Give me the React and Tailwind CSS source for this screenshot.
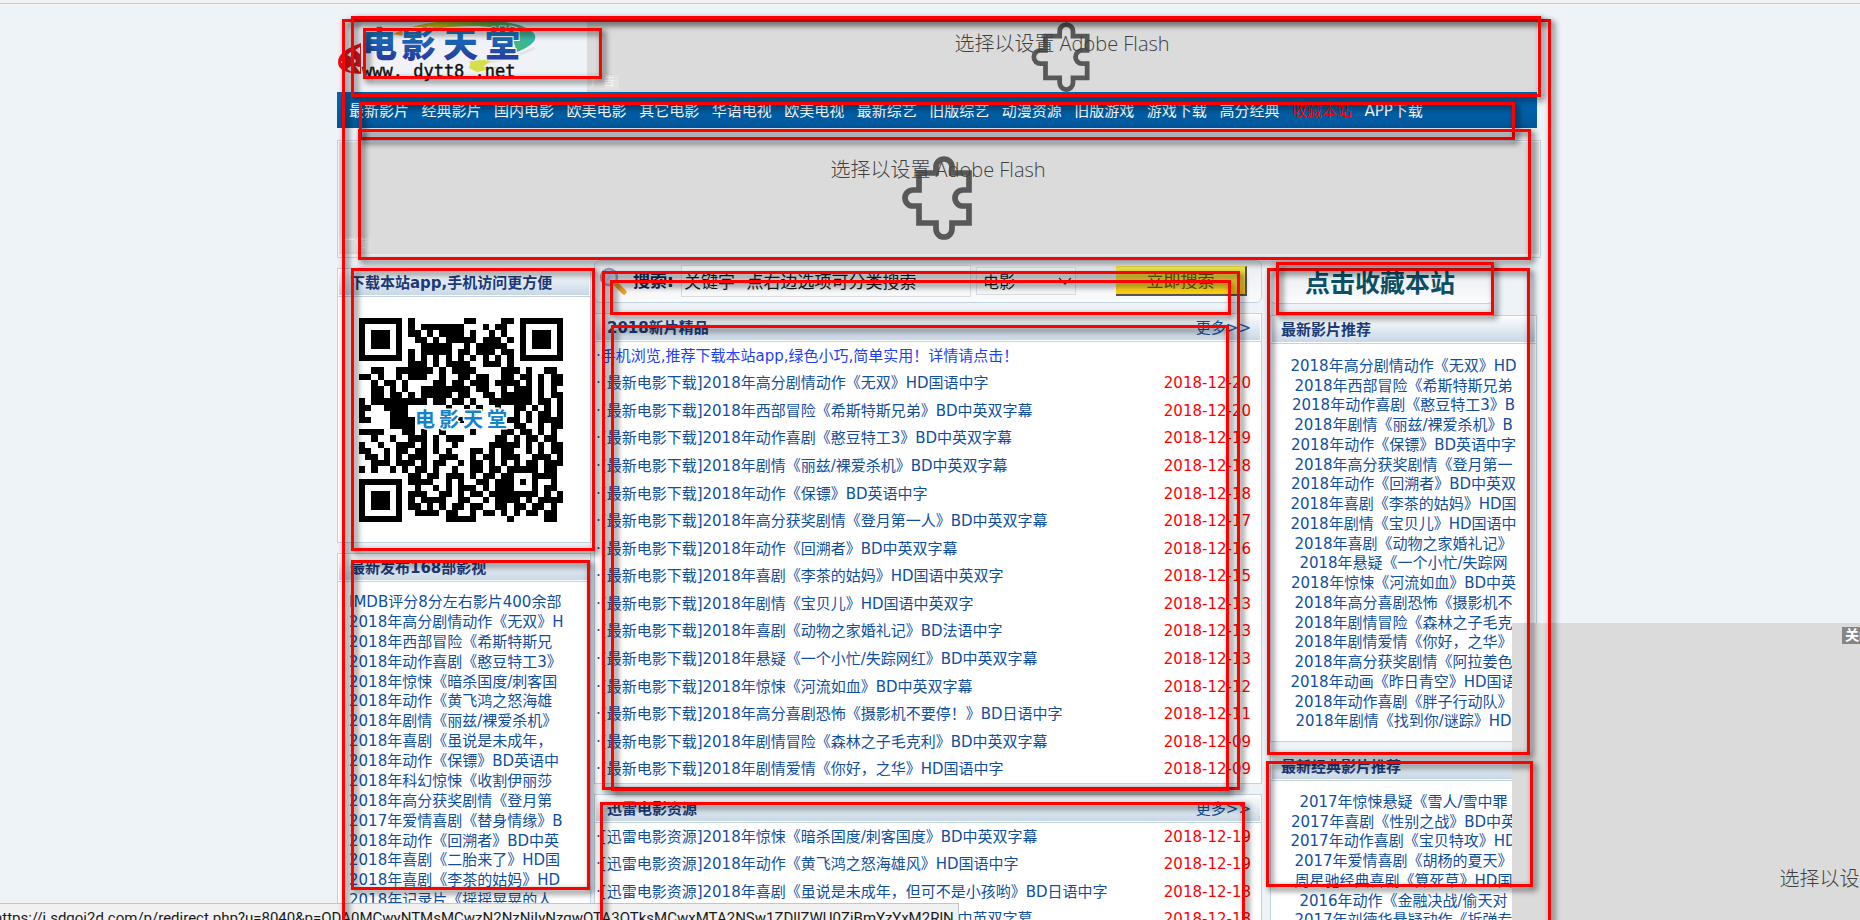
import React from "react";

const NAV = [
  "最新影片", "经典影片", "国内电影", "欧美电影", "其它电影", "华语电视", "欧美电视", "最新综艺",
  "旧版综艺", "动漫资源", "旧版游戏", "游戏下载", "高分经典", "收藏本站", "APP下载",
];

const NEW_168 = [
  "IMDB评分8分左右影片400余部",
  "2018年高分剧情动作《无双》H",
  "2018年西部冒险《希斯特斯兄",
  "2018年动作喜剧《憨豆特工3》",
  "2018年惊悚《暗杀国度/刺客国",
  "2018年动作《黄飞鸿之怒海雄",
  "2018年剧情《丽兹/裸爱杀机》",
  "2018年喜剧《虽说是未成年，",
  "2018年动作《保镖》BD英语中",
  "2018年科幻惊悚《收割伊丽莎",
  "2018年高分获奖剧情《登月第",
  "2017年爱情喜剧《替身情缘》B",
  "2018年动作《回溯者》BD中英",
  "2018年喜剧《二胎来了》HD国",
  "2018年喜剧《李茶的姑妈》HD",
  "2018年记录片《摇摇晃晃的人",
];

const BEST_2018 = [
  ["2018年高分剧情动作《无双》HD国语中字", "2018-12-20"],
  ["2018年西部冒险《希斯特斯兄弟》BD中英双字幕", "2018-12-20"],
  ["2018年动作喜剧《憨豆特工3》BD中英双字幕", "2018-12-19"],
  ["2018年剧情《丽兹/裸爱杀机》BD中英双字幕", "2018-12-18"],
  ["2018年动作《保镖》BD英语中字", "2018-12-18"],
  ["2018年高分获奖剧情《登月第一人》BD中英双字幕", "2018-12-17"],
  ["2018年动作《回溯者》BD中英双字幕", "2018-12-16"],
  ["2018年喜剧《李茶的姑妈》HD国语中英双字", "2018-12-15"],
  ["2018年剧情《宝贝儿》HD国语中英双字", "2018-12-13"],
  ["2018年喜剧《动物之家婚礼记》BD法语中字", "2018-12-13"],
  ["2018年悬疑《一个小忙/失踪网红》BD中英双字幕", "2018-12-13"],
  ["2018年惊悚《河流如血》BD中英双字幕", "2018-12-12"],
  ["2018年高分喜剧恐怖《摄影机不要停！》BD日语中字", "2018-12-11"],
  ["2018年剧情冒险《森林之子毛克利》BD中英双字幕", "2018-12-09"],
  ["2018年剧情爱情《你好，之华》HD国语中字", "2018-12-09"],
];

const XUNLEI = [
  ["2018年惊悚《暗杀国度/刺客国度》BD中英双字幕", "2018-12-19"],
  ["2018年动作《黄飞鸿之怒海雄风》HD国语中字", "2018-12-19"],
  ["2018年喜剧《虽说是未成年，但可不是小孩哟》BD日语中字", "2018-12-18"],
  ["2018年科幻惊悚《收割伊丽莎白》BD中英双字幕", "2018-12-18"],
];

const RECOMMENDED = [
  "2018年高分剧情动作《无双》HD",
  "2018年西部冒险《希斯特斯兄弟",
  "2018年动作喜剧《憨豆特工3》B",
  "2018年剧情《丽兹/裸爱杀机》B",
  "2018年动作《保镖》BD英语中字",
  "2018年高分获奖剧情《登月第一",
  "2018年动作《回溯者》BD中英双",
  "2018年喜剧《李茶的姑妈》HD国",
  "2018年剧情《宝贝儿》HD国语中",
  "2018年喜剧《动物之家婚礼记》",
  "2018年悬疑《一个小忙/失踪网",
  "2018年惊悚《河流如血》BD中英",
  "2018年高分喜剧恐怖《摄影机不",
  "2018年剧情冒险《森林之子毛克",
  "2018年剧情爱情《你好，之华》",
  "2018年高分获奖剧情《阿拉姜色",
  "2018年动画《昨日青空》HD国语",
  "2018年动作喜剧《胖子行动队》",
  "2018年剧情《找到你/谜踪》HD",
];

const CLASSICS = [
  "2017年惊悚悬疑《雪人/雪中罪",
  "2017年喜剧《性别之战》BD中英",
  "2017年动作喜剧《宝贝特攻》HD",
  "2017年爱情喜剧《胡杨的夏天》",
  "周星驰经典喜剧《算死草》HD国",
  "2016年动作《金融决战/偷天对",
  "2017年刘德华悬疑动作《拆弹专",
];

const QR = [
  "#######.#........##....##.#######",
  "#.....#.#.#######...#.##..#.....#",
  "#.###.#.##.#.####.#..#.#..#.###.#",
  "#.###.#..##.#.#####.###.#.#.###.#",
  "#.###.#...#####..#.#####..#.###.#",
  "#.....#.#.#####.##.###.##.#.....#",
  "#######.#.#.#.#.#.#.#.#.#.#######",
  "........###.#.####..###.#........",
  "..##..######.#.####....###.#..##.",
  "##.#..#.###..#..##.##..##.##.#.##",
  "..#.##.#....##.##.###.####.#.#.##",
  "..##.#.#..########.##..#.###.#.#.",
  "..##.##.#.#####.##..##.#####.#.##",
  "#.#########.##.##.#..#######.##.#",
  "##..####......#..#.#..#..##.#.#.#",
  "#....###..........#......#.#.##.#",
  "##...####.......#.......##.#.####",
  ".....####................##..#.##",
  "####...##.#..#....#....##.##.#.#.",
  "..#..#..###.#.###.....##.#.##.##.",
  "#..#..###.#.#..#.....#####.#.#.##",
  "##..#.##.##.#.#...##.#.##..#.#.##",
  ".##.#.#.###..###..#.##.###..###.#",
  "..###.###.#.##..#.##.#.#.#.##.###",
  "#.#..#.#.##.#..#..##.##.#####.##.",
  "........##.##.###.#.##.##...####.",
  "#######.####..#.#..##.###.#.#..#.",
  "#.....#..#..#.#.###.#.###...#.##.",
  "#.###.#.###..##.#.##.########.#.#",
  "#.###.#.#.####..##..#.####.#.####",
  "#.###.#.##.#.#.##.##..##.##.##.#.",
  "#.....#..####.##..#.##.#.#.##.##.",
  "#######.......#####.....#.....##.",
];

const QR_PATH = QR.map((row, y) =>
  [...row].map((c, x) => (c === "#" ? `M${x} ${y}h1v1h-1z` : "")).join("")
).join("");

// Red frames drawn over the page regions, relative to the page container.
const FRAMES = [
  "left-[5px] top-[15px] w-[1209px] h-[1000px]",
  "left-[14px] top-[12px] w-[1190px] h-[81px]",
  "left-[26px] top-[24px] w-[239px] h-[51px]",
  "left-[22px] top-[98px] w-[1156px] h-[38px]",
  "left-[21px] top-[125px] w-[1173px] h-[131px]",
  "left-[14px] top-[264px] w-[244px] h-[283px]",
  "left-[14px] top-[556px] w-[239px] h-[330px]",
  "left-[265px] top-[267px] w-[638px] h-[519px]",
  "left-[273px] top-[276px] w-[621px] h-[35px]",
  "left-[274px] top-[321px] w-[618px] h-[466px]",
  "left-[263px] top-[798px] w-[645px] h-[300px]",
  "left-[930px] top-[264px] w-[263px] h-[487px]",
  "left-[939px] top-[258px] w-[218px] h-[53px]",
  "left-[929px] top-[757px] w-[267px] h-[126px]",
];

function Puzzle({ className }) {
  return (
    <svg viewBox="0 0 70 84" className={className} fill="none" stroke="#585858" strokeWidth="5.7" aria-hidden="true">
      <path d="M17 17H34V11a8 8 0 0 1 16 0V17H67V34H61a8 8 0 0 0 0 16H67V67H50V73a8 8 0 0 1-16 0V67H17V50H11a8 8 0 0 1 0-16H17Z" />
    </svg>
  );
}

function FlashText({ className }) {
  return (
    <button
      type="button"
      className={`col-start-1 row-start-1 self-start whitespace-nowrap font-['Open_Sans','Noto_Sans_CJK_SC',sans-serif] text-[20px] leading-7 font-light text-[#404040] ${className}`}
    >
      选择以设置 Adobe Flash
    </button>
  );
}

function AdTag() {
  return (
    <span className="absolute bottom-0.5 left-0 bg-white/20 px-1 text-[12px] leading-[15px] text-white/80">广告</span>
  );
}

function Logo() {
  return (
    <svg viewBox="0 0 200 65" className="h-[65px] w-[200px] shrink-0" role="img" aria-label="电影天堂">
      <defs>
        <linearGradient id="lg-text" x1="0" y1="0" x2="0" y2="1">
          <stop offset="0" stopColor="#18a8dc" />
          <stop offset="0.5" stopColor="#1c62b4" />
          <stop offset="1" stopColor="#2c2c92" />
        </linearGradient>
        <linearGradient id="lg-arc" x1="0" y1="0" x2="1" y2="0">
          <stop offset="0" stopColor="#f08c1c" />
          <stop offset="0.3" stopColor="#d8cc18" />
          <stop offset="0.7" stopColor="#62b84a" />
          <stop offset="1" stopColor="#30b4ac" />
        </linearGradient>
      </defs>
      <rect width="200" height="65" fill="#f0f2f8" />
      <path d="M56 12C88-4 150-6 182 3c24 8 20 18-2 27l-6-18C160 0 105 2 66 14Z" fill="url(#lg-arc)" />
      <path d="M132 40c18 2 40-2 66-14" fill="none" stroke="#e2e3e8" strokeWidth="3" />
      <path d="M134 39l22-2-10 8h18l-24 5-8-4Z" fill="#d3e04a" />
      <path d="M24 21C10 26 1 32 1 40c0 7 6 11 23 12Z" fill="#d81820" />
      <g fill="#f4eef2">
        <path d="M4 40l4-5v10Z" />
        <path d="M10 33l5-4-1 6Z" />
        <path d="M10 47l5 3-1-6Z" />
        <path d="M18 28l5-3v7Z" />
        <path d="M18 44l5 1v5Z" />
        <circle cx="17" cy="39" r="2" />
      </g>
      <g
        fill="url(#lg-text)"
        stroke="#f4f6fa"
        strokeWidth="2"
        paintOrder="stroke"
        className="font-['Noto_Sans_CJK_SC',sans-serif] text-[35px] font-black"
      >
        <text x="25" y="35">电</text>
        <text x="64" y="35">影</text>
        <text x="106" y="35">天</text>
        <text x="148" y="35">堂</text>
      </g>
      <text x="25" y="55" fill="#111" stroke="#111" strokeWidth="0.4" className="font-['DejaVu_Sans_Mono',monospace] text-[17px]">
        www. dytt8 .net
      </text>
    </svg>
  );
}

function Panel({ title, more, indent, children }) {
  return (
    <section className="border border-[#c2d3e2] bg-white">
      <header className="flex h-[28px] items-center justify-between border-b border-[#c2d3e2] bg-white p-px">
        <div className={`flex h-full w-full items-center justify-between bg-gradient-to-b from-[#fbfcfd] to-[#c9d8e6] pr-[9px] ${indent}`}>
          <h2 className="text-[15px] leading-5 font-bold text-[#1b3a78]">{title}</h2>
          {more && <a href="#more" className="text-[15px] leading-5 text-[#0f4f9e]">更多&gt;&gt;</a>}
        </div>
      </header>
      {children}
    </section>
  );
}

function Dated({ tag, rows }) {
  return rows.map(([title, date]) => (
    <li key={title} className="flex items-center justify-between">
      <span className="whitespace-nowrap">
        ·<a href="#film">[{tag}]{title}</a>
      </span>
      <time className="text-[#f00]">{date}</time>
    </li>
  ));
}

export default function App() {
  return (
    <div className="relative h-screen overflow-hidden bg-[#eef3f8] font-['DejaVu_Sans','Noto_Sans_CJK_SC',sans-serif] text-[15px] leading-5 text-[#0f4f9e]">
      <div className="h-1 border-b border-[#c6cacf] bg-[#f1f1f1]" />

      <div className="pl-[18px]">
        <div className="relative mx-auto max-w-[1204px] pt-[18px]">
          <header className="mr-1 flex h-[70px] justify-between">
            <Logo />
            <div className="relative grid w-[950px] place-items-center bg-[#dbdbdb]">
              <Puzzle className="col-start-1 row-start-1 mr-1 mb-1 h-[70px] w-[59px]" />
              <FlashText className="mt-2" />
              <AdTag />
            </div>
          </header>

          <nav className="mr-1 flex h-9 items-center bg-gradient-to-b from-[#0069b8] to-[#005799] pt-0.5 pl-3">
            <ul className="flex w-[1074px] justify-between text-white">
              {NAV.map((n) => (
                <li key={n}>
                  <a href="#nav" className={n === "收藏本站" ? "text-[#f00]" : ""}>{n}</a>
                </li>
              ))}
            </ul>
          </nav>

          <div className="mt-3 h-[118px] border border-[#c2d3e2] bg-[#eef3f8] p-px pb-[3px]">
            <div className="relative grid h-full place-items-center bg-[#dbdbdb]">
              <Puzzle className="col-start-1 row-start-1 mr-1 h-[84px] w-[70px]" />
              <FlashText className="mt-3.5 mr-0.5" />
              <AdTag />
            </div>
          </div>

          <div className="mt-0.5 mr-1 flex items-start">
            <aside className="mt-2 flex w-[254px] shrink-0 flex-col gap-2.5">
              <Panel title="下载本站app,手机访问更方便" indent="pl-[11px]">
                <div className="grid place-items-center pt-[21px] pr-[27px] pb-5 pl-[21px]">
                  <svg viewBox="0 0 33 33" className="col-start-1 row-start-1 h-[204px] w-[204px]" shapeRendering="crispEdges" role="img" aria-label="QR">
                    <path d={QR_PATH} fill="#000" />
                  </svg>
                  <svg viewBox="0 0 100 28" className="col-start-1 row-start-1 h-7 w-[100px]" aria-hidden="true">
                    <g fill="#1682cc" stroke="#fff" strokeWidth="3" paintOrder="stroke" className="font-['Noto_Sans_CJK_SC',sans-serif] text-[20px] font-bold">
                      <text x="4" y="21">电</text>
                      <text x="28" y="21">影</text>
                      <text x="52" y="21">天</text>
                      <text x="76" y="21">堂</text>
                    </g>
                  </svg>
                </div>
              </Panel>
              <Panel title="最新发布168部影视" indent="pl-[11px]">
                <ul className="grid h-[328px] auto-rows-fr pt-2.5 pl-[11px]">
                  {NEW_168.map((t) => (
                    <li key={t} className="whitespace-nowrap"><a href="#film">{t}</a></li>
                  ))}
                </ul>
              </Panel>
            </aside>

            <main className="ml-[3px] flex min-w-0 grow flex-col gap-2.5">
              <form className="flex h-[43px] items-center rounded-md border border-[#c2d3e2] bg-gradient-to-b from-[#e9ecf2] to-[#fafbfd] pr-3.5 pb-0.5 pl-1" onSubmit={(e) => e.preventDefault()}>
                <svg viewBox="0 0 28 28" className="h-7 w-7 shrink-0" aria-hidden="true">
                  <path d="M17 17l8 8" stroke="#f2a21c" strokeWidth="5" strokeLinecap="round" />
                  <circle cx="10" cy="10" r="8" fill="#d9e1fa" stroke="#9a9cc0" strokeWidth="2.5" />
                  <path d="M5 10a5 5 0 0 1 5-5" stroke="#fff" strokeWidth="2" fill="none" />
                </svg>
                <label htmlFor="q" className="ml-1.5 w-12 shrink-0 text-[17px] font-bold text-[#14284f]">搜索:</label>
                <input
                  id="q"
                  defaultValue="关键字   点右边选项可分类搜索"
                  className="h-8 w-[290px] border border-[#d9dbdf] bg-[#f7f8fa] px-0.5 font-['Noto_Sans_CJK_SC',sans-serif] text-[17px] text-[#1a1a1a]"
                />
                <div className="relative ml-[5px]">
                  <select
                    aria-label="分类"
                    className="h-7 w-[100px] appearance-none border border-[#d9dbdf] bg-[#f4f5f7] px-1.5 font-['Noto_Sans_CJK_SC',sans-serif] text-[16px] leading-5 text-[#1a1a1a]"
                  >
                    <option>电影</option>
                  </select>
                  <svg viewBox="0 0 14 8" className="pointer-events-none absolute top-2.5 right-1 h-2 w-3.5" fill="none" stroke="#444" strokeWidth="1.3" aria-hidden="true">
                    <path d="M1 1l6 6 6-6" />
                  </svg>
                </div>
                <button
                  type="submit"
                  className="ml-auto h-[30px] w-[131px] border-t border-r-2 border-b-2 border-t-[#e8e03a] border-r-[#555] border-b-[#555] bg-gradient-to-b from-[#f0ea4a] to-[#ffcc00] font-['Noto_Sans_CJK_SC',sans-serif] text-[17px] leading-6 text-[#6b5800]"
                >
                  立即搜索
                </button>
              </form>

              <Panel title="2018新片精品" more indent="pl-[11px]">
                <ul className="grid h-[441px] auto-rows-fr items-center pr-2.5 pl-px">
                  <li className="whitespace-nowrap text-[#1c3ffc]">
                    ·<a href="#app">手机浏览,推荐下载本站app,绿色小巧,简单实用！详情请点击！</a>
                  </li>
                  <Dated tag="最新电影下载" rows={BEST_2018} />
                </ul>
              </Panel>
              <Panel title="迅雷电影资源" more indent="pl-[11px]">
                <ul className="grid h-[110px] auto-rows-fr items-center pr-2.5 pl-px">
                  <Dated tag="迅雷电影资源" rows={XUNLEI} />
                </ul>
              </Panel>
            </main>

            <aside className="ml-2 flex w-[267px] shrink-0 flex-col">
              <a
                href="#fav"
                className="mb-[11px] flex h-11 w-[224px] items-center justify-center rounded-md border-b border-[#c2d3e2] bg-gradient-to-b from-[#e6e8ee] to-[#fbfcfd] pr-1 pb-0.5 font-['Noto_Sans_CJK_SC',sans-serif] text-[25px] leading-7 font-bold text-[#0a5066]"
              >
                点击收藏本站
              </a>
              <div className="flex flex-col gap-2.5">
                <Panel title="最新影片推荐" indent="pl-[9px]">
                  <ul className="mt-3 mb-2.5 grid h-[375px] auto-rows-fr text-center">
                    {RECOMMENDED.map((t) => (
                      <li key={t} className="whitespace-nowrap"><a href="#film">{t}</a></li>
                    ))}
                  </ul>
                </Panel>
                <Panel title="最新经典影片推荐" indent="pl-[9px]">
                  <ul className="mt-[11px] mb-2.5 grid h-[138px] auto-rows-fr text-center">
                    {CLASSICS.map((t) => (
                      <li key={t} className="whitespace-nowrap"><a href="#film">{t}</a></li>
                    ))}
                  </ul>
                </Panel>
              </div>
            </aside>
          </div>

          <div className="pointer-events-none absolute top-0 left-0 z-20" aria-hidden="true">
            {FRAMES.map((f) => (
              <div key={f} className={`absolute border-[3px] border-[#f00] drop-shadow-[3px_3px_3px_rgba(0,0,0,0.75)] ${f}`} />
            ))}
          </div>
        </div>
      </div>

      <div className="absolute top-[623px] -right-[402px] z-10 grid h-[360px] w-[750px] justify-items-center bg-[#dbdbdb]">
        <FlashText className="mt-[242px]" />
        <button type="button" className="absolute top-1 left-[330px] bg-[#868686] px-[3px] text-[14px] leading-[17px] font-bold whitespace-nowrap text-white">
          关闭
        </button>
      </div>

      <div className="absolute bottom-0 left-0 z-10 h-[17px] overflow-hidden border-t border-r border-[#c5c5c5] bg-[#f1f1f1] pr-1">
        <p className="-ml-1.5 font-['Roboto',sans-serif] text-[15px] leading-7 whitespace-nowrap text-[#1a1a1a]">
          https://j.sdgoi2d.com/p/redirect.php?u=8040&amp;p=ODA0MCwyNTMsMCwzN2NzNjIyNzgwOTA3OTksMCwxMTA2NSw1ZDllZWU0ZjBmYzYxM2RlN
        </p>
      </div>
    </div>
  );
}
